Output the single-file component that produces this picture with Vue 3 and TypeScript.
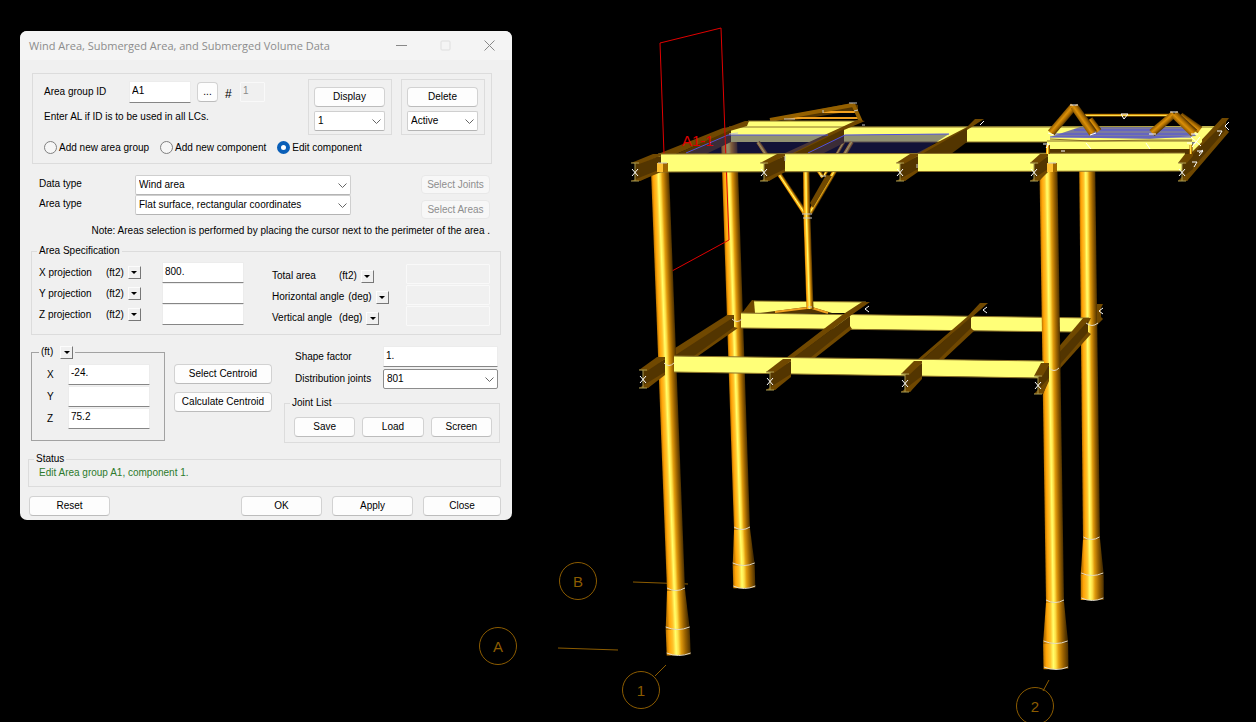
<script setup lang="ts">
import { ref } from 'vue'

interface Tube {
  id: string
  points: string
  gx1: number
  gy1: number
  gx2: number
  gy2: number
}

type Layer = 'rear' | 'brace' | 'front' | 'post' | 'truss'

let serial = 0

/* A shaded cylinder or cone between two centre points, with a width at each end. */
function tube(x1: number, y1: number, w1: number, x2: number, y2: number, w2: number): Tube {
  const len = Math.hypot(x2 - x1, y2 - y1)
  const flip = y2 >= y1 ? 1 : -1
  const nx = (flip * (y2 - y1)) / len
  const ny = (-flip * (x2 - x1)) / len
  const a = w1 / 2
  const b = w2 / 2
  const m = (a + b) / 2
  const cx = (x1 + x2) / 2
  const cy = (y1 + y2) / 2
  const points = [
    [x1 - nx * a, y1 - ny * a],
    [x1 + nx * a, y1 + ny * a],
    [x2 + nx * b, y2 + ny * b],
    [x2 - nx * b, y2 - ny * b],
  ]
    .map((p) => p.join(','))
    .join(' ')
  serial += 1
  return { id: 'tube' + serial, points, gx1: cx - nx * m, gy1: cy - ny * m, gx2: cx + nx * m, gy2: cy + ny * m }
}

const layers: Record<Layer, Tube[]> = {
  rear: [
    tube(729, 138, 16, 742, 529, 16),
    tube(742, 529, 16, 743.7, 565, 22),
    tube(743.7, 565, 22, 744.3, 588, 22),
    tube(1087, 150, 16, 1091.5, 539, 17),
    tube(1091.5, 539, 17, 1092.2, 575, 23),
    tube(1092.2, 575, 23, 1092.3, 600, 23),
  ],
  brace: [
    tube(758, 142, 4, 805, 213, 5),
    tube(852, 142, 4, 810, 213, 5),
    tube(844, 142, 3, 824, 176, 3),
    tube(802, 148, 3, 823, 177, 4),
    tube(806, 150, 6, 807, 218, 7),
    tube(807, 218, 7, 810, 309, 7),
  ],
  front: [
    tube(660, 171, 18, 676, 590, 18),
    tube(676, 590, 18, 677.7, 629, 24),
    tube(677.7, 629, 24, 678.7, 655, 24),
    tube(1048.5, 171, 18, 1055, 602, 18),
    tube(1055, 602, 18, 1055.6, 643, 25),
    tube(1055.6, 643, 25, 1056, 669, 25),
  ],
  post: [
    tube(1048, 145, 4, 1048, 154, 4),
    tube(1191, 145, 3, 1191, 154, 3),
    tube(1085, 115, 3, 1171, 115, 3),
  ],
  truss: [
    tube(1090, 119, 6, 1099, 131, 6),
    tube(1051, 133, 8, 1074, 106, 8),
    tube(1074, 106, 8, 1093, 133, 9),
    tube(1152, 133, 8, 1174, 114, 7),
    tube(1180, 116, 8, 1200, 130, 8),
    tube(1174, 114, 8, 1194, 133, 9),
  ],
}
const brightTubes = [...layers.rear, ...layers.brace, ...layers.front, ...layers.post]

/* Rim arcs: centre x, centre y, half width. */
const rims = [
  [676, 589, 9], [677.7, 628, 12], [678.7, 654, 12],
  [742, 528, 8], [743.7, 564, 11], [744.3, 587, 11],
  [1055, 601, 9], [1055.6, 642, 12], [1056, 668, 12],
  [1091.5, 538, 8], [1092.2, 574, 11], [1092.3, 599, 11],
  [1092, 324, 6], [1054, 369, 5],
  [737, 320, 5], [669, 364, 5],
]

/* Beam ends facing the viewer: x, y of the marker and the reach of the web behind it. */
const upperEnds = [[635, 172, 26], [764, 172, 21], [900, 172, 18], [1034, 172, 14], [1182, 172, 11]]
const lowerEnds = [[643, 379, 22], [770, 381, 21], [905, 383, 17], [1038, 385, 11]]

function webShape(reach: number, rise: number): string {
  return `0,-8 ${reach},${-rise + 1} ${reach},${-rise + 15} 5,9 0,9`
}
function flangeShape(reach: number, rise: number): string {
  return `-4,-9 ${reach - 8},${-rise - 1} ${reach},${-rise - 1} ${reach},${-rise + 1} 4,-8`
}
function baseShape(reach: number, rise: number): string {
  return `-4,9 5,9 ${reach},${-rise + 17} ${reach},${-rise + 14}`
}

const gridMarks = [
  { label: 'B', x: 578, y: 581 },
  { label: 'A', x: 498, y: 646 },
  { label: '1', x: 641, y: 690 },
  { label: '2', x: 1035, y: 706 },
]

const mode = ref('edit')
const groupId = ref('A1')
const shapeFactor = ref('1.')

const projections = ref([
  { axis: 'X', value: '800.' },
  { axis: 'Y', value: '' },
  { axis: 'Z', value: '' },
])
const totals = [
  { name: 'Total area', unit: '(ft2)' },
  { name: 'Horizontal angle', unit: '(deg)' },
  { name: 'Vertical angle', unit: '(deg)' },
]
const centroid = ref([
  { axis: 'X', value: '-24.' },
  { axis: 'Y', value: '' },
  { axis: 'Z', value: '75.2' },
])
const modes = [
  { id: 'group', label: 'Add new area group' },
  { id: 'component', label: 'Add new component' },
  { id: 'edit', label: 'Edit component' },
]
</script>

<template>
  <main class="desktop">
    <svg class="scene" viewBox="0 0 1256 722" preserveAspectRatio="xMinYMin meet" role="img" aria-label="Structural model">
      <defs>
        <linearGradient id="shade">
          <stop offset="0" stop-color="#b87200" />
          <stop offset="0.12" stop-color="#ffa408" />
          <stop offset="0.28" stop-color="#ffc42c" />
          <stop offset="0.4" stop-color="#ffff6c" />
          <stop offset="0.5" stop-color="#ffe048" />
          <stop offset="0.62" stop-color="#e09a0c" />
          <stop offset="0.8" stop-color="#9a6200" />
          <stop offset="1" stop-color="#4c3000" />
        </linearGradient>
        <linearGradient id="shadeDim">
          <stop offset="0" stop-color="#8c5800" />
          <stop offset="0.4" stop-color="#dc9008" />
          <stop offset="0.7" stop-color="#a86a00" />
          <stop offset="1" stop-color="#543400" />
        </linearGradient>
        <linearGradient
          v-for="t in brightTubes" :id="t.id" :key="t.id" href="#shade"
          gradientUnits="userSpaceOnUse" :x1="t.gx1" :y1="t.gy1" :x2="t.gx2" :y2="t.gy2"
        />
        <linearGradient
          v-for="t in layers.truss" :id="t.id" :key="t.id" href="#shadeDim"
          gradientUnits="userSpaceOnUse" :x1="t.gx1" :y1="t.gy1" :x2="t.gx2" :y2="t.gy2"
        />
      </defs>

      <g class="axis">
        <path d="M633 582 688 584M558 648 618 650M666 665 655 676M1049 680 1043 691" />
        <g v-for="m in gridMarks" :key="m.label">
          <circle :cx="m.x" :cy="m.y" r="18.5" />
          <text :x="m.x" :y="m.y + 6">{{ m.label }}</text>
        </g>
      </g>

      <!-- rear legs -->
      <polygon v-for="t in layers.rear" :key="t.id" :points="t.points" :fill="`url(#${t.id})`" />

      <!-- lower deck, rear -->
      <polygon class="flange" points="1097,304 1103,304 1101,308 1101,317 1103,319 1097,325" />
      <polygon class="flange" points="742,313 752,300 757,301 755,313" />
      <polygon class="plate" points="754,301 866,302 850,313 755,313" />
      <polygon class="web" points="760,313 806,307 812,307 832,313" />
      <path class="gold" d="M775 312 807 308M812 308 828 313" />
      <polygon class="plate" points="741,313 1089,318 1073,332 741,328" />
      <path class="edge" d="M741 313 1089 318M741 328 1073 332M754 301 866 302" />

      <!-- lower deck, cross beams -->
      <polygon class="flange" points="672,350 727,315 734,315 734,319 680,356 672,356" />
      <polygon class="web" points="674,356 734,317 734,329 697,356" />
      <polygon class="flange" points="734,327 738,328 698,356 694,356" />
      <polygon class="flange" points="786,358 842,315 862,302 870,302 850,316 794,358" />
      <polygon class="web" points="793,358 850,316 850,328 813,358" />
      <polygon class="flange" points="850,326 852,329 815,358 810,358" />
      <polygon class="flange" points="917,360 967,317 980,303 988,303 971,318 922,360" />
      <polygon class="web" points="922,360 971,317 971,331 942,360" />
      <polygon class="flange" points="971,328 974,331 943,360 938,360" />
      <polygon class="flange" points="1056,350 1083,318 1091,318 1088,324 1056,362" />
      <polygon class="web" points="1056,356 1088,321 1088,334 1056,370" />
      <polygon class="flange" points="1088,332 1091,334 1056,373 1056,369" />

      <!-- upper deck, rear -->
      <polygon class="web" points="770,119 852,103 858,105 858,110 790,121" />
      <path class="gold" d="M786 118H860M823 112H858" />
      <path class="goldDark" d="M770 120 853 105M853 104 861 122" />
      <polygon class="plate" points="748,121 858,121 844,127 740,127" />
      <polygon class="plate" points="729,127 1217,126 1202,142 729,142" />
      <path class="edge" d="M729 127H1217M748 121H857M844 142H1048" />
      <polygon class="flange" points="718,131 745,121 749,121 747,126 730,131" />
      <polygon v-for="t in layers.brace" :key="t.id" :points="t.points" :fill="`url(#${t.id})`" />
      <polygon class="flange" points="826,175 832,176 813,208 810,203" />

      <!-- upper deck, cross beams and selected area -->
      <polygon class="flange" points="658,154 723,128 731,127 731,131 676,154" />
      <polygon class="web" points="676,154 731,130 731,142 706,154" />
      <polygon class="flange" points="783,154 842,127 857,120 865,121 844,130 796,154" />
      <polygon class="web" points="793,154 844,129 844,143 822,154" />
      <polygon class="flange" points="915,154 967,127 975,119 984,119 967,130 925,154" />
      <polygon class="web" points="922,154 967,128 967,142 951,154" />
      <polygon class="tint" points="686,154 729,135 829,135 791,154" />
      <polygon class="tint" points="809,154 844,135 949,134 918,154" />
      <path class="blue" d="M686 153 728 135H828M808 153 845 135 949 134" />

      <!-- area outline -->
      <path class="red" d="M664 154 660 43 721 28 729 240 672 271" />
      <text class="tag" x="682" y="146">A1-1</text>

      <!-- right platform -->
      <polygon class="flange" points="1180,163 1222,118 1229,118 1226,122 1226,129 1229,132 1187,181 1178,181 1187,172" />
      <polygon class="web" points="1183,164 1225,122 1225,131 1183,179" />
      <polygon class="plate" points="1182,154 1202,136 1202,142 1190,154" />
      <polygon class="web" points="1048,149 1192,149 1192,154 1048,154" />
      <polygon class="plate" points="1047,141 1192,141 1192,149 1047,149" />
      <polygon class="hatch" points="1050,137 1080,127 1190,127 1196,136 1150,139" />
      <path class="blue" d="M1054 134H1190M1050 137H1192M1074 130H1188" />
      <path class="edge" d="M1047 141H1192M1050 139 1090 141 1150 140 1192 140" />

      <!-- front members -->
      <polygon v-for="t in layers.front" :key="t.id" :points="t.points" :fill="`url(#${t.id})`" />
      <polygon class="plate" points="674,356 1044,361 1044,378 674,372" />
      <polygon class="plate" points="658,154 1185,153 1185,171 658,172" />
      <path class="edge" d="M674 356 1044 361M674 372 1038 378M658 154 1185 153M658 172 1185 171" />

      <g v-for="e in upperEnds" :key="'u' + e[0]" :transform="`translate(${e[0]} ${e[1]})`">
        <polygon class="web" :points="webShape(e[2], 17)" />
        <polygon class="flange" :points="flangeShape(e[2], 17)" />
        <polygon class="flange" :points="baseShape(e[2], 17)" />
        <path class="section" d="M-4 -9H4M0 -9V9M-4 9H4" />
        <path class="mark" d="M-3 -3 3 4M3 -3 -3 4" />
      </g>
      <rect class="cap" x="657" y="163" width="6" height="9" />
      <rect class="capShade" x="663" y="163" width="5" height="9" />
      <rect class="cap" x="1047" y="163" width="6" height="9" />
      <rect class="capShade" x="1053" y="163" width="4" height="9" />
      <g v-for="e in lowerEnds" :key="'l' + e[0]" :transform="`translate(${e[0]} ${e[1]})`">
        <polygon class="web" :points="webShape(e[2], 21)" />
        <polygon class="flange" :points="flangeShape(e[2], 21)" />
        <polygon class="flange" :points="baseShape(e[2], 21)" />
        <path class="section" d="M-4 -9H4M0 -9V9M-4 9H4" />
        <path class="mark" d="M-3 -3 3 4M3 -3 -3 4" />
      </g>

      <polygon v-for="t in layers.post" :key="t.id" :points="t.points" :fill="`url(#${t.id})`" />
      <polygon v-for="t in layers.truss" :key="t.id" :points="t.points" :fill="`url(#${t.id})`" />
      <path
        v-for="(r, i) in rims" :key="i" class="rim"
        :d="`M${r[0] - r[2]} ${r[1] - 1}Q${r[0]} ${r[1] + 4} ${r[0] + r[2]} ${r[1] - 1}`"
      />
      <path
        class="mark"
        d="M869 306 865 309 869 312M987 307 983 310 987 313M1103 308 1099 311 1103 314M1229 122 1225 126 1229 130M984 121 980 125M1121 114H1128L1124 119ZM1043 144H1049L1046 148M1061 151H1065M1086 143 1091 149M1146 143 1150 149M1217 131H1222L1219 136M1191 137 1201 146M1200 137 1192 147M1187 143H1196M1197 151H1203L1199 156M1192 162H1197L1194 167M1199 153 1203 150M1070 105H1078M1170 112H1178M1048 133 1054 135M1090 135 1096 133M1149 134 1156 134M1191 134 1198 134"
      />
      <path
        class="mark faint"
        d="M802 214 812 214M803 218H812M849 103H857M823 110V113M854 111 858 110M862 125H865M820 176 826 176M1056 163H1048M658 163H667M785 156V161M917 164V168M729 134 738 133M808 307H812M784 119H795"
      />
    </svg>

    <section class="dialog" role="dialog" aria-labelledby="dialog-title">
      <header class="titlebar">
        <h1 id="dialog-title">Wind Area, Submerged Area, and Submerged Volume Data</h1>
        <button class="win" type="button" aria-label="Minimize">
          <svg width="11" height="11" viewBox="0 0 11 11"><path d="M0 5.500H11" /></svg>
        </button>
        <button class="win off" type="button" aria-label="Maximize" disabled>
          <svg width="11" height="11" viewBox="0 0 11 11"><rect x="1" y="1" width="9" height="9" rx="1" /></svg>
        </button>
        <button class="win" type="button" aria-label="Close window">
          <svg width="11" height="11" viewBox="0 0 11 11"><path d="M0.500 0.500 10.500 10.500M10.500 0.500 0.500 10.500" /></svg>
        </button>
      </header>

      <form class="body" @submit.prevent>
        <div class="box identity">
          <div class="identity-top">
            <div class="identity-id">
              <div class="id-row">
                <label for="group-id">Area group ID</label>
                <input id="group-id" v-model="groupId" class="field" type="text" />
                <button class="btn browse" type="button">...</button>
                <label class="hash" for="component-no">#</label>
                <input id="component-no" class="field ghost number" type="text" value="1" disabled />
              </div>
              <p class="hint">Enter AL if ID is to be used in all LCs.</p>
            </div>
            <div class="box action">
              <button class="btn" type="button">Display</button>
              <span class="drop">
                <select aria-label="Component to display"><option>1</option></select>
                <svg class="chevron" viewBox="0 0 9 5"><path d="M0.500 0.500 4.500 4.500 8.500 0.500" /></svg>
              </span>
            </div>
            <div class="box action">
              <button class="btn" type="button">Delete</button>
              <span class="drop">
                <select aria-label="Component to delete"><option>Active</option></select>
                <svg class="chevron" viewBox="0 0 9 5"><path d="M0.500 0.500 4.500 4.500 8.500 0.500" /></svg>
              </span>
            </div>
          </div>
          <div class="radios">
            <label v-for="m in modes" :key="m.id">
              <input v-model="mode" type="radio" name="mode" :value="m.id" />{{ m.label }}
            </label>
          </div>
        </div>

        <div class="types">
          <label for="data-type">Data type</label>
          <span class="drop">
            <select id="data-type"><option>Wind area</option></select>
            <svg class="chevron" viewBox="0 0 9 5"><path d="M0.500 0.500 4.500 4.500 8.500 0.500" /></svg>
          </span>
          <label for="area-type">Area type</label>
          <span class="drop">
            <select id="area-type"><option>Flat surface, rectangular coordinates</option></select>
            <svg class="chevron" viewBox="0 0 9 5"><path d="M0.500 0.500 4.500 4.500 8.500 0.500" /></svg>
          </span>
          <div class="pickers">
            <button class="btn" type="button" disabled>Select Joints</button>
            <button class="btn" type="button" disabled>Select Areas</button>
          </div>
        </div>
        <p class="note">Note: Areas selection is performed by placing the cursor next to the perimeter of the area .</p>

        <fieldset class="spec">
          <legend>Area Specification</legend>
          <div class="spec-grid">
            <div class="spec-col left">
              <div v-for="p in projections" :key="p.axis" class="spec-row">
                <label :for="'proj-' + p.axis">{{ p.axis }} projection</label>
                <span>(ft2)</span>
                <button class="unit" type="button" :aria-label="p.axis + ' projection unit'"></button>
                <input :id="'proj-' + p.axis" v-model="p.value" class="field" type="text" />
              </div>
            </div>
            <div class="spec-col right">
              <div v-for="(t, i) in totals" :key="t.name" class="spec-row">
                <label :for="'total-' + i">{{ t.name }}</label>
                <span>{{ t.unit }}</span>
                <button class="unit" type="button" :aria-label="t.name + ' unit'"></button>
                <input :id="'total-' + i" class="field ghost" type="text" disabled />
              </div>
            </div>
          </div>
        </fieldset>

        <div class="lower">
          <fieldset class="centroid">
            <legend>(ft)<button class="unit" type="button" aria-label="Centroid unit"></button></legend>
            <div v-for="c in centroid" :key="c.axis" class="centroid-row">
              <label :for="'centroid-' + c.axis">{{ c.axis }}</label>
              <input :id="'centroid-' + c.axis" v-model="c.value" class="field" type="text" />
            </div>
          </fieldset>
          <div class="centroid-actions">
            <button class="btn" type="button">Select Centroid</button>
            <button class="btn" type="button">Calculate Centroid</button>
          </div>
          <div class="distribution">
            <div class="dist-row">
              <label for="shape-factor">Shape factor</label>
              <input id="shape-factor" v-model="shapeFactor" class="field" type="text" />
            </div>
            <div class="dist-row">
              <label for="joints">Distribution joints</label>
              <span class="drop strong">
                <select id="joints"><option>801</option></select>
                <svg class="chevron" viewBox="0 0 9 5"><path d="M0.500 0.500 4.500 4.500 8.500 0.500" /></svg>
              </span>
            </div>
            <fieldset class="joint-list">
              <legend>Joint List</legend>
              <div class="joint-actions">
                <button class="btn" type="button">Save</button>
                <button class="btn" type="button">Load</button>
                <button class="btn" type="button">Screen</button>
              </div>
            </fieldset>
          </div>
        </div>

        <fieldset class="status">
          <legend>Status</legend>
          <p>Edit Area group A1, component 1.</p>
        </fieldset>

        <footer class="actions">
          <button class="btn reset" type="button">Reset</button>
          <button class="btn" type="submit">OK</button>
          <button class="btn" type="button">Apply</button>
          <button class="btn close" type="button">Close</button>
        </footer>
      </form>
    </section>
  </main>
</template>

<style>
body {
  margin: 0;
  background: #000;
}
</style>

<style scoped>
.desktop {
  position: relative;
  min-height: 100vh;
  overflow: hidden;
  background: #000;
  font: 10px/14px "Liberation Sans", Arial, sans-serif;
  color: #000;
}
.desktop *,
.desktop *::before {
  box-sizing: border-box;
}
.scene {
  display: block;
  width: 100%;
  height: 100vh;
}

/* model */
.plate { fill: #ffff78; }
.web { fill: #533500; }
.flange { fill: #704800; }
.edge { fill: none; stroke: #8a7028; stroke-width: 1; }
.section { fill: none; stroke: #a89a50; stroke-width: 1; }
.gold { fill: none; stroke: #f0a020; stroke-width: 2; }
.goldDark { fill: none; stroke: #946000; stroke-width: 4; }
.tint { fill: #24246e; fill-opacity: 0.5; }
.hatch { fill: #6464a4; fill-opacity: 0.85; }
.blue { fill: none; stroke: #5050e0; stroke-width: 1; }
.red { fill: none; stroke: #e00000; stroke-width: 1; }
.tag { fill: #e00000; font: 15px "Liberation Sans", sans-serif; }
.cap { fill: #ffc030; }
.capShade { fill: #a06800; }
.rim { fill: none; stroke: #e4dcc8; stroke-width: 1; }
.mark { fill: none; stroke: #fff; stroke-width: 1; }
.faint { stroke: #c8c8c8; }
.axis path,
.axis circle { fill: none; stroke: #8c5c00; stroke-width: 1; }
.axis text {
  fill: #8c5c00;
  font: 15px "Liberation Sans", sans-serif;
  text-anchor: middle;
}

/* dialog */
.dialog {
  position: absolute;
  left: 20px;
  top: 31px;
  width: 492px;
  overflow: hidden;
  border-radius: 7px;
  background: #f0f0f0;
}
.titlebar {
  display: flex;
  align-items: center;
  height: 29px;
  padding: 0 11px 0 9px;
  background: #f4f4f4;
}
h1 {
  flex: 1;
  margin: 0;
  font: 11px/16px "Open Sans", "Noto Sans", sans-serif;
  color: #8c8c8c;
  white-space: nowrap;
}
.win {
  display: grid;
  place-items: center;
  width: 23px;
  height: 24px;
  margin-left: 21px;
  padding: 0;
  border: 0;
  background: none;
}
.win svg {
  fill: none;
  stroke: #888;
  stroke-width: 1;
}
.win.off svg { stroke: #dedede; }

.body {
  padding: 13px 11px 4px 8px;
}
p { margin: 0; }
label,
legend,
p,
.spec-row span { white-space: nowrap; }

.box { border: 1px solid #dcdcdc; }
.btn {
  height: 20px;
  padding: 0;
  border: 1px solid #d2d2d2;
  border-bottom-color: #bcbcbc;
  border-radius: 4px;
  background: #fdfdfd;
  font: inherit;
  color: inherit;
  white-space: nowrap;
}
.btn:disabled {
  border-color: #e8e8e8;
  background: #f7f7f7;
  color: #8e8e8e;
}
.field {
  min-width: 0;
  height: 21px;
  padding: 0 2px 3px;
  border: 1px solid #ececec;
  border-bottom-color: #868686;
  border-radius: 1px;
  background: #fff;
  font: inherit;
  color: inherit;
}
.field.ghost {
  border-color: #f9f9f9;
  background: #f0f0f0;
  color: #8a8a8a;
}
.drop {
  position: relative;
  display: block;
}
.drop select {
  display: block;
  appearance: none;
  width: 100%;
  height: 20px;
  padding: 0 20px 0 3px;
  border: 1px solid #cfcfcf;
  border-bottom-color: #b4b4b4;
  border-radius: 2px;
  background: #fff;
  font: inherit;
  color: inherit;
}
.drop.strong select { border-color: #8c8c8c; }
.chevron {
  position: absolute;
  right: 4px;
  top: 8px;
  width: 9px;
  height: 5px;
  fill: none;
  stroke: #666;
  pointer-events: none;
}
.unit {
  display: grid;
  place-items: center;
  flex: none;
  width: 13px;
  height: 13px;
  padding: 0;
  border: 1px solid #fcfcfc;
  border-right-color: #777;
  border-bottom-color: #777;
  background: #f0f0f0;
}
.unit::before {
  content: "";
  border: 3px solid transparent;
  border-top-color: #000;
  border-bottom: 0;
}

.identity {
  margin: 0 9px 0 4px;
  padding: 5px 6px 9px 11px;
}
.identity-top {
  display: flex;
  gap: 9px;
}
.identity-id {
  flex: 1;
  padding-top: 2px;
}
.id-row {
  display: flex;
  align-items: center;
}
.id-row > label:first-child { width: 85px; }
#group-id { width: 62px; height: 22px; }
.browse {
  width: 21px;
  margin-left: 6px;
}
.id-row .hash {
  width: 22px;
  padding: 3px 0 0 7px;
  font-size: 12px;
}
.number { width: 25px; height: 20px; }
.hint { margin-top: 7px; }
.action {
  display: flex;
  flex-direction: column;
  gap: 4px;
  width: 84px;
  padding: 7px 6px 3px 5px;
}
.radios {
  display: flex;
  gap: 11px;
  margin-top: 6px;
}
.radios label {
  display: flex;
  align-items: center;
  gap: 2px;
  height: 13px;
}
.radios input {
  appearance: none;
  width: 13px;
  height: 13px;
  margin: 0;
  border: 1px solid #808080;
  border-radius: 50%;
  background: #f6f6f6;
}
.radios input:checked {
  border: 4px solid #0a5fb8;
  background: #fff;
}

.types {
  display: grid;
  grid-template: 20px 24px / 96px 216px 1fr;
  align-items: start;
  margin: 11px 11px 0 11px;
}
.types > label { line-height: 18px; }
.pickers {
  grid-column: 3;
  grid-row: 1 / 3;
  justify-self: end;
  display: grid;
  gap: 6px;
  width: 69px;
}
.pickers .btn { height: 19px; }
.note {
  margin: 5px 11px 0 0;
  text-align: right;
}

fieldset {
  min-width: 0;
  margin: 0;
  padding: 0;
  border: 1px solid #dcdcdc;
}
legend { padding: 0 2px; }

.spec { margin: 6px 0 0 3px; }
.spec legend { margin-left: 5px; }
.spec-grid {
  display: flex;
  justify-content: space-between;
  padding: 4px 10px 9px 7px;
}
.spec-row {
  display: flex;
  align-items: center;
  gap: 4px;
  height: 21px;
}
.spec-row label { min-width: 63px; }
.spec-row .field { margin-left: auto; }
.left { width: 205px; }
.left .field { width: 82px; }
.right { width: 218px; }
.right .spec-row { padding-top: 2px; }
.right label,
.right span,
.right .unit { margin-top: 5px; }
.right .field { width: 84px; height: 20px; }

.lower {
  display: flex;
  align-items: flex-start;
  margin: 10px 1px 0 3px;
}
.centroid {
  width: 134px;
  padding: 4px 14px 11px 15px;
  border-color: #a2a2a2;
}
.centroid legend {
  display: flex;
  align-items: center;
  gap: 7px;
  margin-left: -8px;
}
.centroid-row {
  display: flex;
  align-items: center;
  justify-content: space-between;
  height: 22px;
}
.centroid-row label { padding-top: 2px; }
.centroid-row .field { width: 82px; }
.centroid-actions {
  display: grid;
  gap: 8px;
  width: 98px;
  margin: 19px 12px 0 9px;
}
.distribution { flex: 1; }
.dist-row {
  display: flex;
  align-items: center;
  justify-content: space-between;
  margin: 1px 2px 2px 11px;
}
.dist-row .field,
.dist-row .drop { width: 115px; }
.joint-list { margin-top: 7px; }
.joint-list legend { margin-left: 5px; }
.joint-actions {
  display: grid;
  grid-template-columns: repeat(3, 1fr);
  gap: 7px;
  padding: 7px 7px 5px 9px;
}

.status { margin-top: 9px; }
.status legend { margin-left: 5px; }
.status p {
  padding: 0 10px 6px;
  color: #2c7a2c;
}
.actions {
  display: flex;
  gap: 10px;
  margin-top: 9px;
}
.actions .btn { width: 81px; }
.actions .reset { margin: 0 auto 0 1px; }
.actions .close { width: 78px; }
</style>
